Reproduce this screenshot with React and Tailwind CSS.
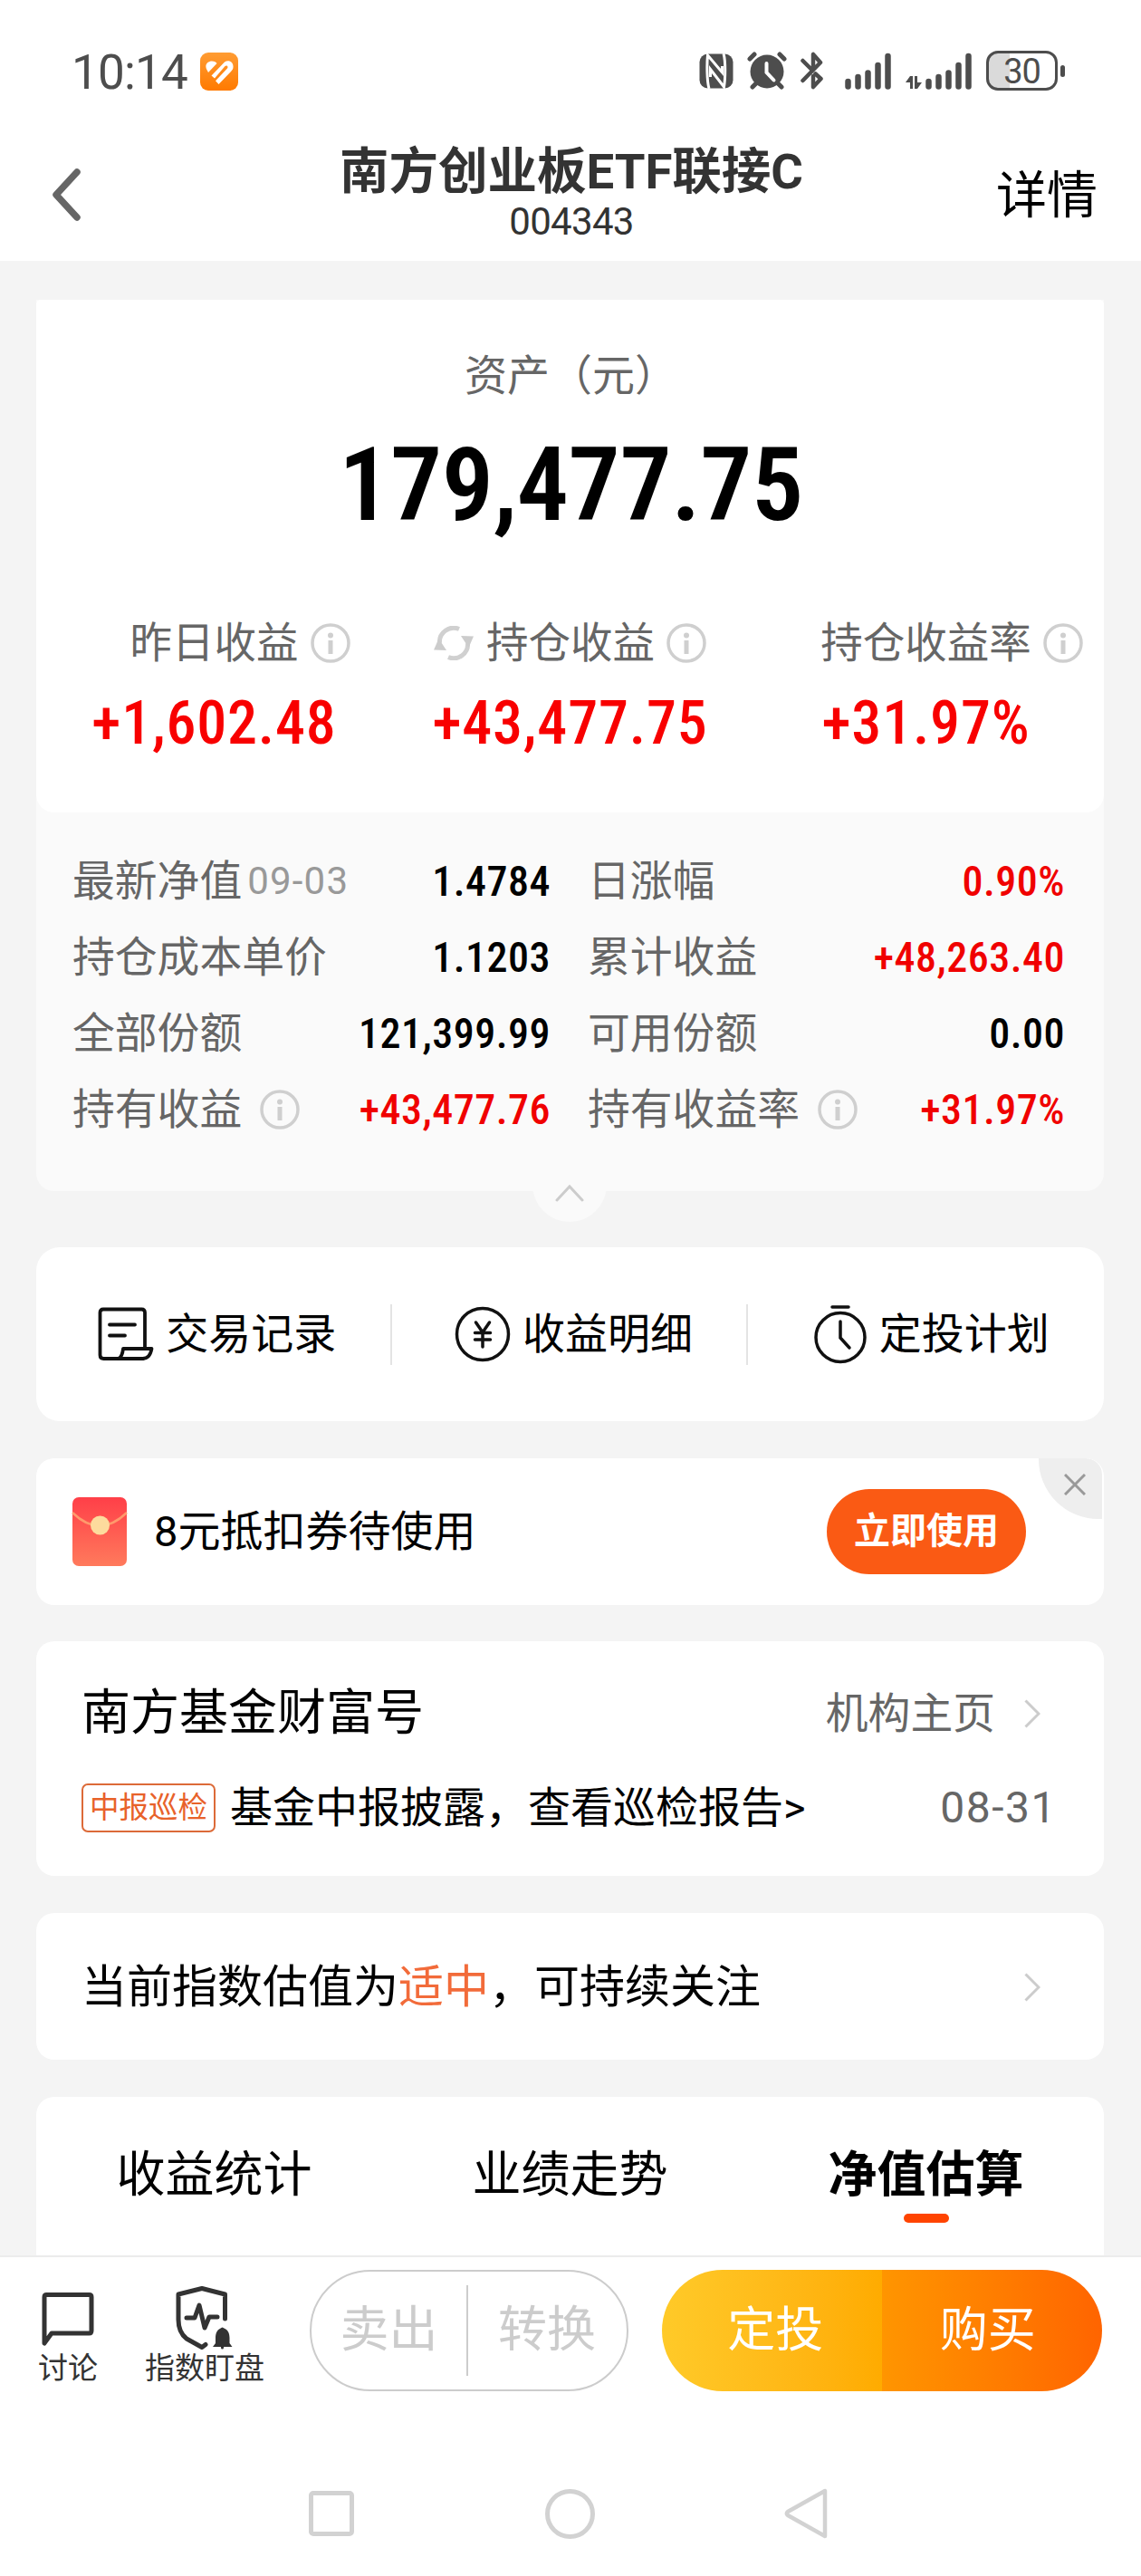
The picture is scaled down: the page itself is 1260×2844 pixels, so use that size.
import { clsx } from "clsx";

const summary = [
  { label: "昨日收益", value: "+1,602.48", offset: "pl-[57px]" },
  { label: "持仓收益", value: "+43,477.75", refresh: true },
  { label: "持仓收益率", value: "+31.97%", offset: "pl-[57px]" },
];

const details = [
  { label: "最新净值", date: "09-03", value: "1.4784" },
  { label: "日涨幅", value: "0.90%", up: true },
  { label: "持仓成本单价", value: "1.1203" },
  { label: "累计收益", value: "+48,263.40", up: true },
  { label: "全部份额", value: "121,399.99" },
  { label: "可用份额", value: "0.00" },
  { label: "持有收益", value: "+43,477.76", up: true, info: true },
  { label: "持有收益率", value: "+31.97%", up: true, info: true },
];

const tabs = ["收益统计", "业绩走势", "净值估算"];

const InfoIcon = ({ className }) => (
  <svg
    viewBox="0 0 44 44"
    className={clsx("size-[44px] shrink-0", className)}
    fill="none"
    stroke="#cfcfcf"
    strokeWidth="3.500"
  >
    <circle cx="22" cy="22" r="20" />
    <circle cx="22" cy="13.500" r="3" fill="#cfcfcf" stroke="none" />
    <path d="M22 19v15" strokeWidth="5" />
  </svg>
);

const RefreshIcon = () => (
  <svg viewBox="0 0 44 38" className="h-[38px] w-[44px] shrink-0" fill="none">
    <path d="M28 3.500A15.500 15.500 0 0 0 6.500 19" stroke="#d0d0d0" strokeWidth="5" />
    <path d="M16 34.500A15.500 15.500 0 0 0 37.500 19" stroke="#d0d0d0" strokeWidth="5" />
    <path d="M0 26.500L5.500 14l8.500 13z" fill="#cccccc" />
    <path d="M44 11.500L38.500 24 30 11z" fill="#cccccc" />
  </svg>
);

const ArrowRight = ({ className }) => (
  <svg
    viewBox="0 0 18 32"
    className={clsx("h-[32px] w-[18px] shrink-0", className)}
    fill="none"
    stroke="#cccccc"
    strokeWidth="3"
  >
    <path d="M1.500 1.500L16 16 1.500 30.500" />
  </svg>
);

const SignalBars = ({ className }) => (
  <svg
    viewBox="0 0 51 41"
    className={clsx("h-[41px] w-[51px]", className)}
    stroke="#4d4d4d"
    strokeWidth="6.500"
    strokeLinecap="round"
  >
    <path d="M3.500 32v5.500M14.500 27v10.500M25.500 22.500v15M36.500 14v23.500M47.500 4v33.500" />
  </svg>
);

const StatusBar = () => (
  <div className="flex h-[156px] items-center pl-[79px] pr-[84px] text-[#4d4d4d]">
    <span className="mt-[4px] w-[131px] whitespace-nowrap text-[53px] leading-none tracking-[-0.8px]">
      10:14
    </span>
    <svg viewBox="0 0 42 42" className="ml-[11px] mt-[2px] size-[42px]">
      <defs>
        <linearGradient id="app-badge" x1="0" y1="0" x2="0" y2="1">
          <stop offset="0" stopColor="#ff9c33" />
          <stop offset="1" stopColor="#ff7a00" />
        </linearGradient>
      </defs>
      <rect width="42" height="42" rx="9" fill="url(#app-badge)" />
      <path
        d="M8 20C4 14 8 9.500 13 9.500c3 0 4.500 1 5.500 2.500L9 22zM12.500 25.500L27 10.500c4-3 10-.5 9.500 5.500 0 2-1 3.500-2.500 5L20.500 35l-3.500-3.800L30 17.500c1.500-2-.5-4-2.500-2.500L16 28.500z"
        fill="#fff"
      />
    </svg>

    <svg viewBox="0 0 38 39" className="ml-auto h-[39px] w-[38px]">
      <rect x="0.500" y="0.500" width="37" height="38" rx="9" fill="#4d4d4d" />
      <path
        d="M11 39C8.500 30 8.500 11 9.500 2L25.500 21V14M27 0c2.500 9 2 28 .5 37L12.500 17.500V26"
        fill="none"
        stroke="#fff"
        strokeWidth="3"
      />
    </svg>
    <svg
      viewBox="0 0 44 42"
      className="ml-[15px] h-[42px] w-[44px]"
      stroke="#4d4d4d"
      strokeLinecap="round"
    >
      <circle cx="22" cy="22" r="18.500" fill="#4d4d4d" stroke="none" />
      <path d="M3 8l5-5M41 8l-5-5M6 39l6-6M38 39l-6-6" strokeWidth="5" />
      <path d="M21.500 13v10l8 8.500" fill="none" stroke="#fff" strokeWidth="4" />
    </svg>
    <svg
      viewBox="0 0 26 42"
      className="ml-[15px] h-[42px] w-[26px]"
      fill="none"
      stroke="#4d4d4d"
      strokeWidth="4.500"
      strokeLinejoin="round"
      strokeLinecap="round"
    >
      <path d="M2.500 10L12 19.500M2.500 32L22 12 14 3v14M16.500 24.500L22.500 30 14 39V27" />
    </svg>
    <SignalBars className="ml-[23px]" />
    <svg viewBox="0 0 18 15" className="ml-[16px] mt-[26px] h-[15px] w-[18px]" fill="#4d4d4d">
      <path d="M5 0h3v14H5V7H0zM10 0h3v7h5l-5 7h-3z" />
    </svg>
    <SignalBars className="ml-[4px]" />

    <div className="ml-[16px] flex h-[44px] w-[79px] items-center justify-center rounded-[13px] border-[3px] border-[#4d4d4d] bg-linear-to-r from-[#dadada] from-32% to-white to-32% pt-[2px] text-[38px] leading-none tracking-[-1px]">
      30
    </div>
    <div className="ml-[3px] h-[13px] w-[5px] rounded-full bg-[#4d4d4d]" />
  </div>
);

const Header = () => (
  <header className="flex h-[132px] items-start justify-between pl-[58px] pr-[48px]">
    <svg
      viewBox="0 0 32 58"
      className="mt-[30px] h-[58px] w-[32px]"
      fill="none"
      stroke="#666666"
      strokeWidth="7.500"
      strokeLinecap="round"
      strokeLinejoin="round"
    >
      <path d="M27 4L4 29l23 25" />
    </svg>
    <div className="ml-[72px] text-center text-[#333333]">
      <h1 className="mt-[6px] text-[54.500px] font-bold leading-[54px]">
        南方创业板ETF联接C
      </h1>
      <p className="mt-[8px] text-[42px] leading-[42px] tracking-[-0.7px]">004343</p>
    </div>
    <button className="mt-[33px] text-[56px] leading-[55px]">详情</button>
  </header>
);

const AssetCard = () => (
  <section className="mt-[43px] rounded-b-[20px] bg-[#fafafa]">
    <div className="h-[566px] rounded-b-[20px] rounded-t-[5px] bg-white pt-[61px]">
      <p className="pl-[2px] text-center text-[47px] leading-[46px] text-[#666666]">
        资产（元）
      </p>
      <p className="mt-[40px] pl-[2px] text-center text-[114px] font-semibold leading-[114px] tracking-[-0.5px] [font-stretch:75%]">
        179,477.75
      </p>
      <div className="mt-[96px] grid grid-cols-3">
        {summary.map((item) => (
          <div key={item.label} className="flex flex-col items-center whitespace-nowrap">
            <div className={clsx("flex h-[44px] items-center", item.offset)}>
              {item.refresh && (
                <span className="mr-[14px]">
                  <RefreshIcon />
                </span>
              )}
              <span className="text-[46.500px] leading-[46px] text-[#666666]">
                {item.label}
              </span>
              <InfoIcon className="ml-[13px]" />
            </div>
            <p className="mt-[34px] text-[66px] font-medium leading-[66px] tracking-[0.8px] text-[#f80000] [font-stretch:75%]">
              {item.value}
            </p>
          </div>
        ))}
      </div>
    </div>

    <div className="relative grid h-[418px] grid-cols-[528px_527px] content-start gap-x-[41px] pl-[40px] pt-[34px]">
      {details.map((item) => (
        <div key={item.label} className="flex h-[84px] items-center whitespace-nowrap">
          <span className="text-[46.800px] leading-[46px] text-[#666666]">{item.label}</span>
          {item.date && (
            <span className="ml-[6px] text-[42px] leading-[46px] tracking-[1.200px] text-[#999999]">
              {item.date}
            </span>
          )}
          {item.info && <InfoIcon className="ml-[20px]" />}
          <span
            className={clsx(
              "ml-auto text-[46px] font-medium leading-[46px] tracking-[0.5px] [font-stretch:75%]",
              item.up ? "text-[#f00000]" : "text-black"
            )}
          >
            {item.value}
          </span>
        </div>
      ))}
      {/* collapse handle hanging off the bottom edge */}
      <div className="absolute -bottom-[34px] left-[548px] flex size-[82px] items-center justify-center rounded-full bg-[#fafafa]">
        <svg viewBox="0 0 32 20" className="mt-[18px] h-[20px] w-[32px]" fill="none" stroke="#cccccc" strokeWidth="3">
          <path d="M2 18L16 3l14 15" strokeLinecap="round" />
        </svg>
      </div>
    </div>
  </section>
);

const RecordIcon = () => (
  <svg
    viewBox="0 0 62 60"
    className="h-[60px] w-[62px]"
    fill="none"
    stroke="#111"
    strokeWidth="3.800"
    strokeLinejoin="round"
    strokeLinecap="round"
  >
    <path d="M52 46V6q0-3.500-3.500-3.500H6Q2.500 2.500 2.500 6v47q0 4 4 4H50" />
    <path d="M28 46h31.500q-2 11-10 11H23q4-2 5-11zM13 19.500h28M13 31.500h17" />
  </svg>
);

const YuanIcon = () => (
  <svg
    viewBox="0 0 62 62"
    className="size-[62px]"
    fill="none"
    stroke="#111"
    strokeWidth="3.500"
    strokeLinecap="round"
  >
    <circle cx="31" cy="31" r="28.500" />
    <path d="M23.500 18L31 29l7.500-11M31 29v16M22.500 29.500h17M22.500 37h17" />
  </svg>
);

const TimerIcon = () => (
  <svg
    viewBox="0 0 60 66"
    className="h-[66px] w-[60px]"
    fill="none"
    stroke="#111"
    strokeWidth="3.500"
    strokeLinecap="round"
  >
    <circle cx="30" cy="36.500" r="27" />
    <path d="M21 3h18M30 19v18l10 11" />
  </svg>
);

const QuickActions = () => (
  <section className="mt-[62px] flex h-[192px] items-center rounded-[26px] bg-white text-[47px] leading-[46px]">
    <div className="flex flex-1 items-center justify-center gap-[13px] pb-px pl-[9px]">
      <RecordIcon />
      交易记录
    </div>
    <div className="h-[67px] w-[2px] bg-[#e4e4e4]" />
    <div className="flex flex-1 items-center justify-center gap-[13px] pl-[10px]">
      <YuanIcon />
      收益明细
    </div>
    <div className="h-[67px] w-[2px] bg-[#e4e4e4]" />
    <div className="flex flex-1 items-center justify-center gap-[13px] pl-[11px]">
      <TimerIcon />
      定投计划
    </div>
  </section>
);

const CouponCard = () => (
  <section className="relative mt-[41px] flex h-[162px] items-center overflow-hidden rounded-[20px] bg-white pb-px pl-[39px] pr-[86px]">
    <svg viewBox="0 0 62 76" className="h-[76px] w-[62px]">
      <defs>
        <linearGradient id="packet" x1="0" y1="0" x2="0" y2="1">
          <stop offset="0" stopColor="#ff3f48" />
          <stop offset="1" stopColor="#ff7a5c" />
        </linearGradient>
      </defs>
      <rect x="1" width="60" height="76" rx="7" fill="url(#packet)" />
      <path d="M1 17Q31 46 61 17" fill="none" stroke="#ff9a6c" strokeWidth="2.500" />
      <circle cx="31.500" cy="31" r="10.500" fill="#fddb9d" />
    </svg>
    <span className="ml-[29px] text-[47px] leading-[46px]">8元抵扣券待使用</span>
    <button className="ml-auto h-[94px] w-[220px] rounded-full bg-[#fa5a14] text-[40px] font-bold leading-[39px] text-white">
      立即使用
    </button>
    <div className="absolute right-[2px] top-0 flex h-[67px] w-[70px] items-center justify-center rounded-bl-[66px] rounded-tr-[18px] bg-[#eeeeee] pb-[10px] pl-[10px]">
      <svg viewBox="0 0 24 24" className="size-[24px]" stroke="#999999" strokeWidth="3">
        <path d="M1 1l22 22M23 1L1 23" />
      </svg>
    </div>
  </section>
);

const FundAccount = () => (
  <section className="mt-[40px] h-[259px] rounded-[20px] bg-white pl-[50px] pr-[52px] pt-[50px]">
    <div className="flex h-[60px] items-center">
      <h2 className="text-[54px] leading-[54px]">南方基金财富号</h2>
      <span className="ml-auto mr-[32px] text-[46.800px] leading-[46px] text-[#666666]">
        机构主页
      </span>
      <ArrowRight className="mr-[18px]" />
    </div>
    <div className="mt-[47px] flex h-[54px] items-center whitespace-nowrap">
      <span className="h-[54px] rounded-[7px] border-2 border-[#dc6a38] px-[7px] text-[32.500px] leading-[50px] text-[#e8622a]">
        中报巡检
      </span>
      <span className="ml-[16px] text-[47px] leading-[46px]">
        基金中报披露，查看巡检报告&gt;
      </span>
      <span className="ml-auto text-[48px] leading-[48px] tracking-[1.500px] text-[#666666]">
        08-31
      </span>
    </div>
  </section>
);

const Valuation = () => (
  <section className="mt-[41px] flex h-[162px] items-center justify-between rounded-[20px] bg-white pl-[50px] pr-[70px] pt-[2px]">
    <p className="text-[50px] leading-[50px]">
      当前指数估值为<span className="text-[#f26b3a]">适中</span>，可持续关注
    </p>
    <ArrowRight />
  </section>
);

const StatTabs = () => (
  <section className="mt-[41px] grid h-[175px] grid-cols-3 rounded-t-[20px] bg-white">
    {tabs.map((tab) => {
      const active = tab === "净值估算";
      return (
        <div key={tab} className="flex flex-col items-center pt-[60px]">
          <span className={clsx("text-[54px] leading-[54px]", active && "font-bold")}>
            {tab}
          </span>
          {active && <span className="mt-[15px] h-[10px] w-[50px] rounded-full bg-[#ff4400]" />}
        </div>
      );
    })}
  </section>
);

const BottomBar = () => (
  <footer className="flex h-[206px] items-start border-t-2 border-[#ececec] bg-white pl-[42px] pr-[43px]">
    <div className="mt-[39px] flex flex-col items-center text-[33px] leading-[33px] text-[#333333]">
      <svg
        viewBox="0 0 58 60"
        className="h-[60px] w-[58px]"
        fill="none"
        stroke="#333"
        strokeWidth="5"
        strokeLinejoin="round"
      >
        <path d="M3 56V5q0-2.500 2.500-2.500h47q2.500 0 2.500 2.500v37q0 3-2.500 3H11z" />
      </svg>
      <span className="mt-[7px]">讨论</span>
    </div>
    <div className="ml-[52px] mt-[32px] flex flex-col items-center text-[33px] leading-[33px] text-[#333333]">
      <svg
        viewBox="0 0 64 70"
        className="h-[70px] w-[64px]"
        fill="none"
        stroke="#333"
        strokeWidth="5"
        strokeLinecap="round"
        strokeLinejoin="round"
      >
        <path d="M54.500 36V9L29 2.500 3 9v28q0 14 9 21l17 9.500 4-3" />
        <path d="M12 35h9l5-14 6 25 5-12h9" />
        <path
          d="M51.500 46c6 1 8 6 8 11v6l3 4H41l3-4v-6c0-5 2-10 7.500-11z"
          fill="#333"
          stroke="none"
        />
        <path d="M51.500 47v21" strokeWidth="3" />
      </svg>
      <span className="mt-[4px]">指数盯盘</span>
    </div>
    <div className="ml-[50px] mt-[14px] flex h-[134px] w-[352px] items-center rounded-full border-2 border-[#cccccc] text-[54px] leading-[54px] text-[#cccccc]">
      <button className="w-[171px]">卖出</button>
      <span className="h-[100px] w-[2px] bg-[#cccccc]" />
      <button className="w-[174px]">转换</button>
    </div>
    <div className="ml-auto mt-[14px] flex h-[134px] w-[486px] overflow-hidden rounded-full text-[53px] leading-[53px] text-white">
      <button className="flex-1 bg-linear-to-r from-[#ffca28] to-[#ffab00] pl-[8px]">定投</button>
      <button className="flex-1 bg-linear-to-r from-[#ff9500] to-[#ff6400] pr-[9px]">购买</button>
    </div>
  </footer>
);

const SystemNav = () => (
  <nav className="flex items-center pl-[341px] pt-[51px]">
    <div className="size-[50px] rounded-[5px] border-[5px] border-[#d2d2d2]" />
    <div className="ml-[211px] size-[55px] rounded-full border-[5px] border-[#d2d2d2]" />
    <svg
      viewBox="0 0 48 56"
      className="ml-[209px] h-[56px] w-[48px]"
      fill="none"
      stroke="#d2d2d2"
      strokeWidth="4.500"
      strokeLinejoin="round"
    >
      <path d="M45 3v50L4 30q-2.500-2 0-4z" />
    </svg>
  </nav>
);

export default function App() {
  return (
    <div className="flex h-[2844px] w-[1260px] flex-col overflow-hidden bg-white font-['Roboto','Noto_Sans_CJK_SC',sans-serif] text-black">
      <StatusBar />
      <Header />
      <main className="flow-root h-[2202px] bg-[#f4f4f4] pl-[40px] pr-[41px]">
        <AssetCard />
        <QuickActions />
        <CouponCard />
        <FundAccount />
        <Valuation />
        <StatTabs />
      </main>
      <BottomBar />
      <SystemNav />
    </div>
  );
}
